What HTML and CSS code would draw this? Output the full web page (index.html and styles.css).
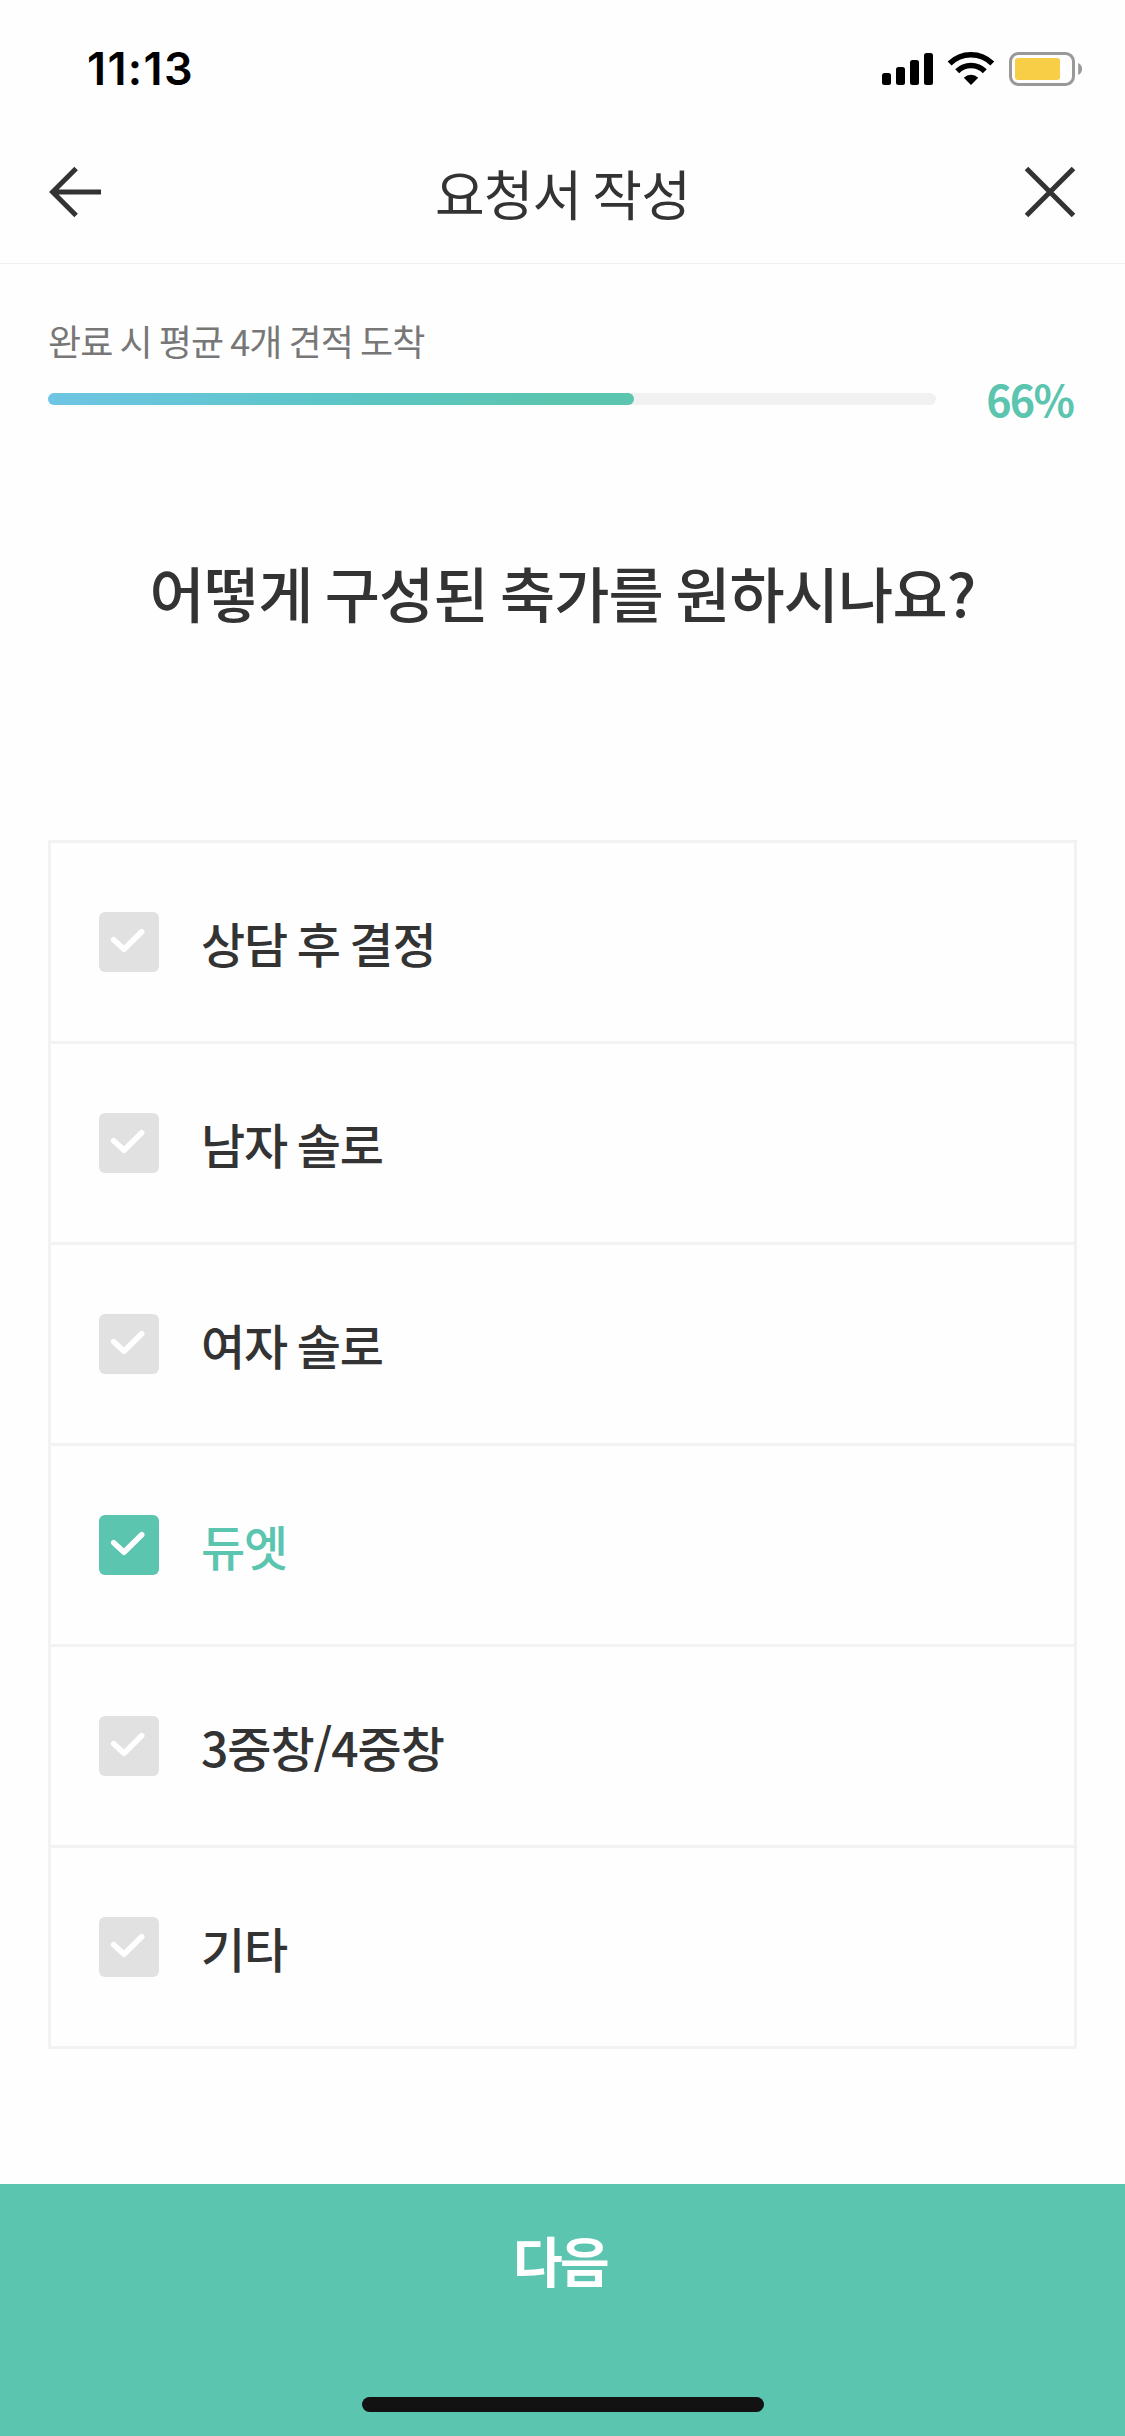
FILE: index.html
```html
<!DOCTYPE html>
<html lang="ko">
<head>
<meta charset="utf-8">
<title>요청서 작성</title>
<link rel="stylesheet" href="styles.css">
</head>
<body>
<div class="screen">
  <div class="status">
    <span class="clock">11:13</span>
    <svg class="status-icons" width="202" height="38" viewBox="881 50 202 38">
      <rect x="882" y="73" width="9" height="12" rx="2.5"/>
      <rect x="896" y="67" width="9" height="18" rx="2.5"/>
      <rect x="910" y="60" width="9" height="25" rx="2.5"/>
      <rect x="924" y="53" width="9" height="32" rx="2.5"/>
      <g fill="none" stroke="#000" stroke-width="5.600">
        <path d="M949.600 63.600a30.200 30.200 0 0 1 42.700 0"/>
        <path d="M957.200 71.200a19.500 19.500 0 0 1 27.600 0"/>
      </g>
      <path d="M971 85l-7.200-7.200a10.300 10.300 0 0 1 14.400 0z"/>
      <rect x="1010.500" y="53.500" width="63" height="31" rx="8" fill="none" stroke="#999" stroke-width="3"/>
      <rect x="1015" y="58" width="45" height="22" rx="3" fill="#f7ce46"/>
      <path d="M1078.200 63c5.200 2.200 5.200 9.800 0 12z" fill="#999"/>
    </svg>
  </div>
  <header class="header">
    <svg class="icon" width="54" height="54" viewBox="0 0 54 54" fill="none" stroke="#333" stroke-width="5">
      <path d="M28.100 3.500L4.600 27L28.100 50.500M5 27H53"/>
    </svg>
    <h1 class="title">요청서 작성</h1>
    <svg class="icon" width="54" height="54" viewBox="0 0 54 54" fill="none" stroke="#333" stroke-width="5">
      <path d="M3.500 3.500L50.500 50.500M50.500 3.500L3.500 50.500"/>
    </svg>
  </header>
  <section class="progress">
    <p class="progress-label">완료 시 평균 4개 견적 도착</p>
    <div class="progress-row">
      <div class="track"><div class="fill" style="width:66%"></div></div>
      <span class="percent">66%</span>
    </div>
  </section>
  <h2 class="question">어떻게 구성된 축가를 원하시나요?</h2>
  <ul class="options">
    <li class="option"><svg class="check" viewBox="0 0 60 60"><path d="M14.700 27.700L25 37.200L42.700 19.700"/></svg><span>상담 후 결정</span></li>
    <li class="option"><svg class="check" viewBox="0 0 60 60"><path d="M14.700 27.700L25 37.200L42.700 19.700"/></svg><span>남자 솔로</span></li>
    <li class="option"><svg class="check" viewBox="0 0 60 60"><path d="M14.700 27.700L25 37.200L42.700 19.700"/></svg><span>여자 솔로</span></li>
    <li class="option selected"><svg class="check" viewBox="0 0 60 60"><path d="M14.700 27.700L25 37.200L42.700 19.700"/></svg><span>듀엣</span></li>
    <li class="option"><svg class="check" viewBox="0 0 60 60"><path d="M14.700 27.700L25 37.200L42.700 19.700"/></svg><span>3중창/4중창</span></li>
    <li class="option"><svg class="check" viewBox="0 0 60 60"><path d="M14.700 27.700L25 37.200L42.700 19.700"/></svg><span>기타</span></li>
  </ul>
  <footer class="next">
    <span class="next-label">다음</span>
    <div class="home-indicator"></div>
  </footer>
</div>
</body>
</html>
```
FILE: styles.css
```css
* { box-sizing: border-box; }
body {
  margin: 0;
  background: #fefefe;
  color: #333;
  font-family: "Noto Sans CJK KR", sans-serif;
}
h1, h2, p, ul { margin: 0; padding: 0; }
.screen {
  width: 1125px;
  height: 2436px;
  display: flex;
  flex-direction: column;
}
.status {
  height: 120px;
  padding: 50px 42px 0 87px;
  display: flex;
  justify-content: space-between;
  align-items: flex-start;
}
.clock {
  font-family: Inter, sans-serif;
  font-weight: 600;
  font-size: 45px;
  line-height: 38px;
  letter-spacing: 1.4px;
  color: #000;
}
.status-icons { display: block; }
.header {
  height: 144px;
  padding: 0 48px;
  border-bottom: 1px solid #f0f0f0;
  display: flex;
  justify-content: space-between;
  align-items: center;
}
.icon { display: block; }
.title {
  padding-top: 2px;
  font-size: 54px;
  font-weight: 400;
  line-height: 80px;
  letter-spacing: -0.9px;
  word-spacing: -0.06em;
}
.progress { padding: 49px 48px 0; }
.progress-label {
  font-size: 36px;
  line-height: 54px;
  color: #777;
  letter-spacing: -0.9px;
  word-spacing: -0.06em;
}
.progress-row {
  height: 60px;
  margin-top: 2px;
  display: flex;
  align-items: center;
  justify-content: space-between;
}
.track {
  width: 888px;
  height: 12px;
  border-radius: 6px;
  background: #f1f1f1;
}
.fill {
  height: 100%;
  border-radius: inherit;
  background: linear-gradient(90deg, #6ec5e4, #5cc5c6 50%, #5bc5b0 85%);
}
.percent {
  padding: 0 4px 3px 0;
  font-size: 43px;
  font-weight: 700;
  line-height: 56px;
  letter-spacing: -1.8px;
  color: #5bc5b0;
}
.question {
  margin-top: 118px;
  height: 90px;
  font-size: 60px;
  font-weight: 500;
  line-height: 90px;
  letter-spacing: -0.9px;
  word-spacing: -0.06em;
  text-align: center;
}
.options {
  list-style: none;
  margin: 203px 48px 0;
  border: 3px solid #f2f2f2;
}
.option {
  height: 198px;
  padding-left: 48px;
  display: flex;
  align-items: center;
  gap: 42px;
  font-size: 48px;
  font-weight: 500;
  line-height: 72px;
  letter-spacing: -0.022em;
  word-spacing: -0.06em;
}
.option + .option {
  height: 201px;
  border-top: 3px solid #f2f2f2;
}
.check {
  width: 60px;
  height: 60px;
  border-radius: 6px;
  background: #e1e1e1;
  fill: none;
  stroke: #fff;
  stroke-width: 5.6;
  stroke-linecap: round;
  stroke-linejoin: round;
}
.selected { color: #5bc5b0; }
.selected .check { background: #5bc5b0; }
.next {
  margin-top: auto;
  height: 252px;
  padding-bottom: 24px;
  background: #5bc5b0;
  display: flex;
  flex-direction: column;
  align-items: center;
  justify-content: space-between;
}
.next-label {
  padding: 1px 5px 0 0;
  color: #fff;
  font-size: 54px;
  font-weight: 700;
  line-height: 150px;
  letter-spacing: -0.05em;
}
.home-indicator {
  width: 402px;
  height: 15px;
  border-radius: 8px;
  background: #121212;
}
```
